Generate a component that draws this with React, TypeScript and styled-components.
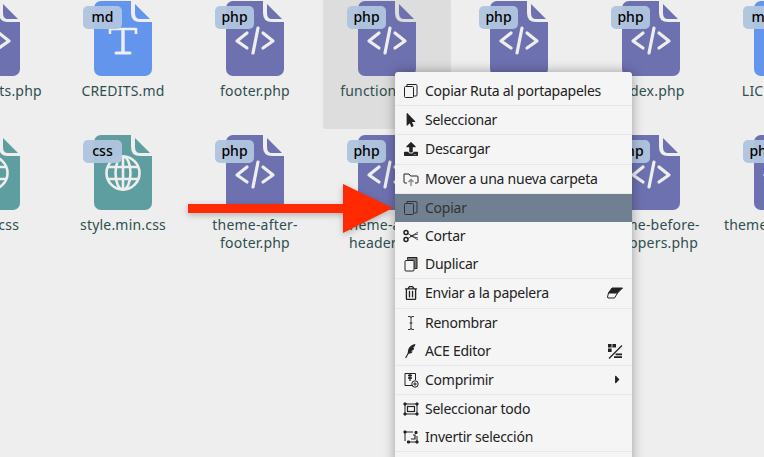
import React from 'react'
import styled, { createGlobalStyle } from 'styled-components'
import { FaMousePointer, FaUpload, FaRegTrashAlt, FaCaretRight } from 'react-icons/fa'

const GlobalStyle = createGlobalStyle`
  html, body {
    margin: 0;
    padding: 0;
    background: #eeeeee;
    font-family: "Noto Sans", "Liberation Sans", sans-serif;
  }
`

const Page = styled.div`
  position: relative;
  width: 764px;
  height: 457px;
  overflow: hidden;
  background: #eeeeee;
`

const FileGrid = styled.div`
  display: grid;
  grid-template-columns: repeat(7, 128px);
  grid-auto-rows: 130px;
  gap: 4px;
  width: max-content;
  margin: -1px 0 0 -73px;
`

const FileCell = styled.div<{ $selected?: boolean }>`
  display: flex;
  flex-direction: column;
  align-items: center;
  padding-top: 2px;
  box-sizing: border-box;
  border-radius: 3px;
  background: ${props => (props.$selected ? '#dddddd' : 'transparent')};
`

const FileIconBox = styled.div`
  position: relative;
  width: 58px;
  height: 75px;
  flex: none;
`

const FileSvg = styled.svg`
  display: block;
`

const Badge = styled.span`
  position: absolute;
  left: -11px;
  top: 5px;
  width: 39px;
  height: 23px;
  border-radius: 5px;
  background: rgba(176, 196, 222, 0.97);
  color: #000;
  font-size: 14px;
  font-weight: 500;
  line-height: 22px;
  text-align: center;
`

const FileName = styled.div`
  margin-top: 6px;
  width: 128px;
  color: #2f4f4f;
  font-size: 14px;
  letter-spacing: 0.2px;
  line-height: 18px;
  text-align: center;
`

const Menu = styled.div`
  position: absolute;
  left: 395px;
  top: 72px;
  width: 237px;
  padding: 5px 0 28px;
  box-sizing: border-box;
  background: #f5f5f5;
  border-radius: 3px;
  box-shadow: 0 0 12px rgba(0, 0, 0, 0.35);
  color: #222;
`

const MenuRow = styled.div<{ $active?: boolean }>`
  display: flex;
  align-items: center;
  gap: 6px;
  height: 28px;
  padding: 0 9px 1px 8px;
  box-sizing: border-box;
  font-size: 14px;
  letter-spacing: -0.25px;
  background: ${props => (props.$active ? '#708090' : 'transparent')};
  color: ${props => (props.$active ? '#333' : 'inherit')};
`

const MenuLabel = styled.span`
  flex: 1;
  white-space: nowrap;
`

const MenuIcon = styled.svg`
  width: 16px;
  height: 16px;
  flex: none;
  fill: none;
  stroke: currentColor;
  stroke-width: 1;
`

const IconSlot = styled.span`
  display: flex;
  justify-content: center;
  align-items: center;
  width: 16px;
  height: 16px;
  flex: none;
  font-size: 14px;
`

const CaretSlot = styled(IconSlot)`
  padding-left: 5px;
  box-sizing: border-box;
  font-size: 13px;
`

const Separator = styled.div<{ $wide?: boolean }>`
  height: 1px;
  margin-top: ${props => (props.$wide ? '1px' : '0')};
  background: #e8e8e8;
`

const ArrowOverlay = styled.svg`
  position: absolute;
  left: 188px;
  top: 184px;
  filter: drop-shadow(0 2px 3px rgba(0, 0, 0, 0.25));
`

type Kind = 'php' | 'md' | 'css'

const fileColors: Record<Kind, string> = {
  php: '#6e71b0',
  md: '#6495ed',
  css: '#5f9ea0',
}

const PhpMark = () => (
  <g fill="none" stroke="#eeeeee" strokeWidth="3.2" strokeLinecap="round" strokeLinejoin="round">
    <path d="M21 32 L11 40 L21 47" />
    <path d="M37 32 L47 40 L37 47" />
    <path d="M32 27 L27 52" />
  </g>
)

const MdMark = () => (
  <g fill="none" stroke="#eeeeee" strokeWidth="2.6" strokeLinejoin="round">
    <path d="M16 33 V28 H42 V33" />
    <path d="M29 28 V52" strokeWidth="3.4" />
    <path d="M22 52 H36" strokeWidth="3" strokeLinecap="round" />
  </g>
)

const CssMark = () => (
  <g fill="none" stroke="#eeeeee" strokeWidth="2.6">
    <circle cx="29" cy="38" r="16.5" />
    <ellipse cx="29" cy="38" rx="7.5" ry="16.5" />
    <path d="M29 21 V55 M13 32 H45 M13 44 H45" />
  </g>
)

const marks = { php: PhpMark, md: MdMark, css: CssMark }

const FileGraphic = ({ kind }: { kind: Kind }) => {
  const Mark = marks[kind]
  return (
    <FileSvg width="58" height="75" viewBox="0 0 58 75">
      <path
        d="M7 0 H37 V12 Q37 21 46 21 H58 V68 a7 7 0 0 1 -7 7 H7 a7 7 0 0 1 -7 -7 V7 a7 7 0 0 1 7 -7 Z"
        fill={fileColors[kind]}
      />
      <path d="M41 3 L56 18 H46 Q41 18 41 12 Z" fill={fileColors[kind]} />
      <Mark />
    </FileSvg>
  )
}

const files: { name: string; kind: Kind; selected?: boolean }[] = [
  { name: 'comments.php', kind: 'php' },
  { name: 'CREDITS.md', kind: 'md' },
  { name: 'footer.php', kind: 'php' },
  { name: 'functions.php', kind: 'php', selected: true },
  { name: 'header.php', kind: 'php' },
  { name: 'index.php', kind: 'php' },
  { name: 'LICENSE.md', kind: 'md' },
  { name: 'style.css', kind: 'css' },
  { name: 'style.min.css', kind: 'css' },
  { name: 'theme-after-footer.php', kind: 'php' },
  { name: 'theme-after-header.php', kind: 'php' },
  { name: 'theme-before-footer.php', kind: 'php' },
  { name: 'theme-before-wrappers.php', kind: 'php' },
  { name: 'theme-footer.php', kind: 'php' },
]

const CopyIcon = () => (
  <MenuIcon viewBox="0 0 16 16">
    <rect x="1.5" y="3.5" width="9" height="11" rx="1" />
    <path d="M4 3.5 V1.5 H13 a1 1 0 0 1 1 1 V12 a1 1 0 0 1 -1 1 H10.5" />
  </MenuIcon>
)

const MoveIcon = () => (
  <MenuIcon viewBox="0 0 16 16">
    <path d="M4 12 H2 a1 1 0 0 1 -1 -1 V3 h5 l1.5 2 H14 a1 1 0 0 1 1 1 V11 a1 1 0 0 1 -1 1 h-2" />
    <path d="M8 15 V8.5 M5.5 11 L8 8.5 L10.5 11" stroke="#888" strokeWidth="1.4" />
  </MenuIcon>
)

const ScissorsIcon = () => (
  <MenuIcon viewBox="0 0 16 16">
    <circle cx="3" cy="4.5" r="2" strokeWidth="1.5" />
    <circle cx="3" cy="11.5" r="2" strokeWidth="1.5" />
    <path d="M5 5.5 L15 12 M5 10.5 L15 4 M7 8 L15 10 M7 8 L15 6" strokeWidth="0.8" />
  </MenuIcon>
)

const DuplicateIcon = () => (
  <MenuIcon viewBox="0 0 16 16">
    <path d="M4.5 3.5 V1.5 H14 V12.5 H11.5" fill="#777" />
    <rect x="2" y="4.5" width="9" height="10.5" rx="1" fill="#f5f5f5" />
  </MenuIcon>
)

const EraserIcon = () => (
  <MenuIcon viewBox="0 0 16 16">
    <path d="M5 3 H15.5 L10.5 8 H1.5 Z" fill="currentColor" />
    <path d="M1.5 8 H10.5 L7.5 13 H1 L0.5 12 Z" fill="#f5f5f5" />
  </MenuIcon>
)

const CursorIcon = () => (
  <MenuIcon viewBox="0 0 16 16">
    <path d="M5 1.5 H7 Q8 1.5 8 3 V13 Q8 14.5 7 14.5 H5 M11 1.5 H9 Q8 1.5 8 3 M8 13 Q8 14.5 9 14.5 H11" strokeWidth="0.9" />
    <path d="M6.5 8 H9.5" strokeWidth="0.9" />
  </MenuIcon>
)

const FeatherIcon = () => (
  <MenuIcon viewBox="0 0 16 16">
    <path
      d="M12.5 1 C8.5 1.5 5.5 4 5 8 L4.6 10.6 C7 11 9 10 9.6 8.4 L7.8 8.2 L10.4 7 C11 6 11.2 5.2 11.2 4.6 L9.4 4.8 L11.6 3.4 Z"
      fill="currentColor"
      stroke="none"
    />
    <path d="M6.6 8 L2.6 15" strokeWidth="1.1" />
  </MenuIcon>
)

const CompressIcon = () => (
  <MenuIcon viewBox="0 0 16 16">
    <path d="M9.5 13.5 H2 V1.5 H12.5 V8" />
    <path d="M7 1.5 V9 M5 3.5 H9 M5 6 H9" strokeWidth="1.3" />
    <circle cx="12" cy="12" r="3.2" />
    <path d="M10.3 12 H13.7 M12 10.3 V13.7" />
  </MenuIcon>
)

const SelectAllIcon = () => (
  <MenuIcon viewBox="0 0 16 16">
    <rect x="2" y="3" width="12" height="10" />
    <rect x="4.5" y="5.5" width="7" height="5" strokeWidth="1.2" />
    <path d="M1 2 h2 v2 h-2 Z M13 2 h2 v2 h-2 Z M1 12 h2 v2 h-2 Z M13 12 h2 v2 h-2 Z" fill="currentColor" />
  </MenuIcon>
)

const InvertIcon = () => (
  <MenuIcon viewBox="0 0 16 16">
    <path d="M2 12 V3 H10 M14 7 V13 H6" />
    <path d="M10 6 H12 V10 H10 M10 10 H8" strokeWidth="1.2" />
    <path d="M1 2 h2 v2 h-2 Z M4.5 12 h2 v2 h-2 Z M13 12 h2 v2 h-2 Z M12 2.5 h2 v2 h-2 Z" fill="currentColor" />
  </MenuIcon>
)

const EditorHint = () => (
  <MenuIcon viewBox="0 0 16 16">
    <path d="M1 1 h3.6 v3.6 h-3.6 Z M5.4 1 h3.6 v3.6 h-3.6 Z M1 5.4 h3.6 v3.6 h-3.6 Z" fill="currentColor" stroke="none" />
    <path d="M2 15.5 L15 2.5" strokeWidth="1.2" />
    <path d="M8.6 10.6 h6.4 v1.6 h-6.4 Z M7 13.2 h8 v1.8 h-8 Z" fill="currentColor" stroke="none" />
  </MenuIcon>
)

type MenuEntry =
  | { label: string; icon: React.ReactNode; hint?: React.ReactNode; active?: boolean }
  | 'sep'
  | 'wideSep'

const menuItems: MenuEntry[] = [
  { label: 'Copiar Ruta al portapapeles', icon: <CopyIcon /> },
  'sep',
  { label: 'Seleccionar', icon: <IconSlot><FaMousePointer /></IconSlot> },
  'sep',
  { label: 'Descargar', icon: <IconSlot><FaUpload /></IconSlot> },
  'wideSep',
  { label: 'Mover a una nueva carpeta', icon: <MoveIcon /> },
  'sep',
  { label: 'Copiar', icon: <CopyIcon />, active: true },
  { label: 'Cortar', icon: <ScissorsIcon /> },
  { label: 'Duplicar', icon: <DuplicateIcon /> },
  'sep',
  { label: 'Enviar a la papelera', icon: <IconSlot><FaRegTrashAlt /></IconSlot>, hint: <EraserIcon /> },
  'wideSep',
  { label: 'Renombrar', icon: <CursorIcon /> },
  { label: 'ACE Editor', icon: <FeatherIcon />, hint: <EditorHint /> },
  'sep',
  { label: 'Comprimir', icon: <CompressIcon />, hint: <CaretSlot><FaCaretRight /></CaretSlot> },
  'sep',
  { label: 'Seleccionar todo', icon: <SelectAllIcon /> },
  { label: 'Invertir selección', icon: <InvertIcon /> },
  'sep',
]

const App = () => (
  <Page>
    <GlobalStyle />
    <FileGrid>
      {files.map(file => (
        <FileCell key={file.name} $selected={file.selected}>
          <FileIconBox>
            <FileGraphic kind={file.kind} />
            <Badge>{file.kind}</Badge>
          </FileIconBox>
          <FileName>{file.name}</FileName>
        </FileCell>
      ))}
    </FileGrid>
    <Menu>
      {menuItems.map((item, i) =>
        item === 'sep' || item === 'wideSep' ? (
          <Separator key={i} $wide={item === 'wideSep'} />
        ) : (
          <MenuRow key={item.label} $active={item.active}>
            {item.icon}
            <MenuLabel>{item.label}</MenuLabel>
            {item.hint}
          </MenuRow>
        )
      )}
    </Menu>
    <ArrowOverlay width="207" height="52" viewBox="0 0 207 52">
      <path d="M0 20 H155 V0 L205 24 L155 49 V29 H0 Z" fill="#ff2a00" />
    </ArrowOverlay>
  </Page>
)

export default App
